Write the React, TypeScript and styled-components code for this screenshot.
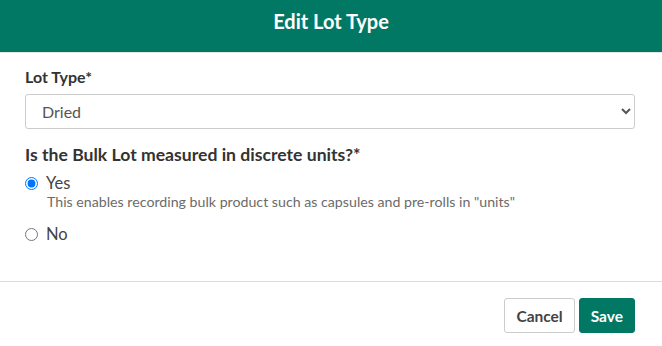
import React, { useState } from 'react';
import styled, { createGlobalStyle } from 'styled-components';

const GlobalStyle = createGlobalStyle`
  html, body {
    margin: 0;
    padding: 0;
    background: #fff;
    font-family: Lato, "Open Sans", sans-serif;
  }
`;

const Modal = styled.div`
  width: 662px;
  height: 346px;
  display: flex;
  flex-direction: column;
  background: #fff;
  overflow: hidden;
`;

const Header = styled.div`
  height: 53px;
  flex-shrink: 0;
  box-sizing: border-box;
  padding-bottom: 11px;
  background: #017864;
  display: flex;
  align-items: center;
  justify-content: center;
  border-bottom: 1px solid #e6e6e6;
`;

const Title = styled.h1`
  margin: 0;
  color: #fff;
  font-size: 20px;
  font-weight: 700;
  line-height: 24px;
`;

const Body = styled.div`
  padding: 14px 27px 0 25px;
  height: 214px;
  flex-shrink: 0;
  border-bottom: 1px solid #dcdcdc;
`;

const Label = styled.div<{ $top?: number; $size: number }>`
  font-size: ${({ $size }) => $size}px;
  font-weight: 700;
  line-height: 20px;
  color: #333;
  margin-top: ${({ $top }) => $top ?? 0}px;
`;

const Select = styled.select`
  display: block;
  width: 100%;
  height: 35px;
  margin-top: 7px;
  padding: 0 10px 0 12px;
  border: 1px solid #ccc;
  border-radius: 3px;
  background: #fff;
  color: #555;
  font-family: Lato, sans-serif;
  font-size: 16px;
`;

const RadioRow = styled.label<{ $top: number }>`
  display: flex;
  align-items: center;
  gap: 8px;
  margin-top: ${({ $top }) => $top}px;
  font-size: 16.5px;
  line-height: 20px;
  color: #444;
`;

const Radio = styled.input`
  margin: 0;
  width: 13px;
  height: 13px;
`;

const Help = styled.div`
  padding-left: 22px;
  font-size: 14.2px;
  line-height: 17px;
  color: #6b6b6b;
`;

const Footer = styled.div`
  display: flex;
  justify-content: flex-end;
  gap: 4px;
  padding: 16px 27px 0 0;
`;

const Button = styled.button<{ $primary?: boolean }>`
  height: 35px;
  padding: 0 11px;
  border-radius: 3px;
  font-family: Lato, sans-serif;
  font-size: 15.5px;
  font-weight: 700;
  border: 1px solid ${({ $primary }) => ($primary ? '#017864' : '#ccc')};
  background: ${({ $primary }) => ($primary ? '#017864' : '#fff')};
  color: ${({ $primary }) => ($primary ? '#fff' : '#444')};
`;

export default function App() {
  const [discrete, setDiscrete] = useState('yes');

  return (
    <Modal>
      <GlobalStyle />
      <Header>
        <Title>Edit Lot Type</Title>
      </Header>
      <Body>
        <Label $size={16}>Lot Type*</Label>
        <Select defaultValue="dried">
          <option value="dried">Dried</option>
        </Select>
        <Label $size={17.6} $top={16}>Is the Bulk Lot measured in discrete units?*</Label>
        <RadioRow $top={8}>
          <Radio type="radio" name="discrete" checked={discrete === 'yes'} onChange={() => setDiscrete('yes')} />
          Yes
        </RadioRow>
        <Help>This enables recording bulk product such as capsules and pre-rolls in "units"</Help>
        <RadioRow $top={14}>
          <Radio type="radio" name="discrete" checked={discrete === 'no'} onChange={() => setDiscrete('no')} />
          No
        </RadioRow>
      </Body>
      <Footer>
        <Button>Cancel</Button>
        <Button $primary>Save</Button>
      </Footer>
    </Modal>
  );
}
